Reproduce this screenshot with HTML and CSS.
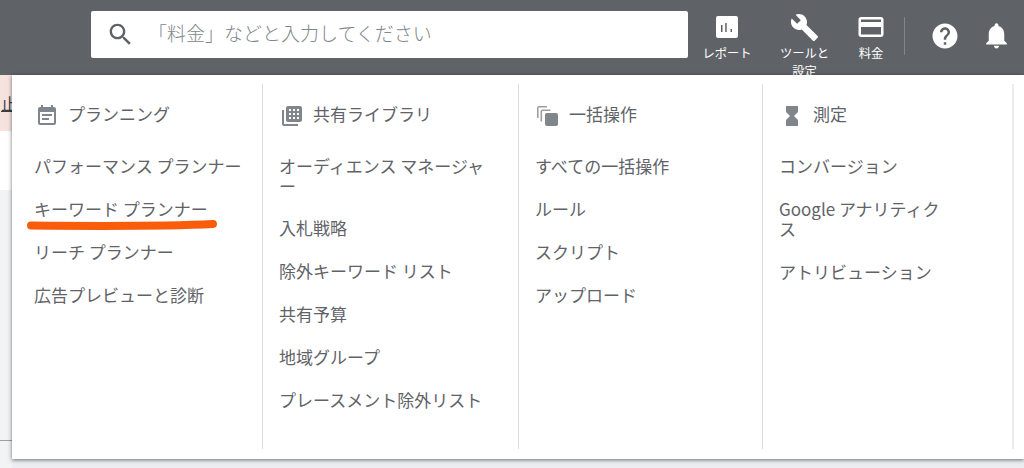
FILE: index.html
```html
<!DOCTYPE html>
<html lang="ja">
<head>
<meta charset="utf-8">
<title>ツールと設定</title>
<link rel="stylesheet" href="styles.css">
</head>
<body>
<header class="topbar">
  <div class="search">
    <svg class="search-icon" viewBox="0 0 24 24"><path d="M15.5 14h-.79l-.28-.27C15.41 12.59 16 11.11 16 9.5 16 5.91 13.09 3 9.5 3S3 5.91 3 9.5 5.91 16 9.5 16c1.61 0 3.09-.59 4.23-1.57l.27.28v.79l5 4.99L20.49 19l-4.99-5zm-6 0C7.01 14 5 11.99 5 9.5S7.01 5 9.5 5 14 7.01 14 9.5 11.99 14 9.5 14z"/></svg>
    <span class="placeholder">「料金」などと入力してください</span>
  </div>
  <nav class="tools">
    <div class="tool tool-report">
      <div class="tool-icon"><svg class="ic-report" viewBox="0 0 22 22"><path fill-rule="evenodd" d="M2 0h18a2 2 0 0 1 2 2v18a2 2 0 0 1-2 2H2a2 2 0 0 1-2-2V2a2 2 0 0 1 2-2zM5 9v7h1.5V9zM9.2 7v9h1.5V7zM14.5 13v3H16v-3z"/></svg></div>
      <span class="tool-label">レポート</span>
    </div>
    <div class="tool tool-tools">
      <div class="tool-icon"><svg class="ic-wrench" viewBox="1 1 22 22"><path d="M22.7 19l-9.1-9.1c.9-2.3.4-5-1.5-6.9-2-2-5-2.4-7.4-1.3L9 6 6 9 1.6 4.7C.4 7.1.9 10.1 2.9 12.1c1.9 1.9 4.6 2.4 6.9 1.5l9.1 9.1c.4.4 1 .4 1.4 0l2.3-2.3c.5-.4.5-1.1.1-1.4z"/></svg></div>
      <span class="tool-label">ツールと設定</span>
    </div>
    <div class="tool tool-billing">
      <div class="tool-icon"><svg class="ic-card" viewBox="0 0 24 24"><path d="M20 4H4c-1.11 0-1.99.89-1.99 2L2 18c0 1.11.89 2 2 2h16c1.11 0 2-.89 2-2V6c0-1.11-.89-2-2-2zm0 14H4v-6h16v6zm0-10H4V6h16v2z"/></svg></div>
      <span class="tool-label">料金</span>
    </div>
    <div class="tools-divider"></div>
    <svg class="ic-help" viewBox="0 0 24 24"><path d="M12 2C6.48 2 2 6.48 2 12s4.48 10 10 10 10-4.48 10-10S17.52 2 12 2zm1 17h-2v-2h2v2zm2.07-7.75l-.9.92C13.45 12.9 13 13.5 13 15h-2v-.5c0-1.1.45-2.1 1.17-2.83l1.24-1.26c.37-.36.59-.86.59-1.41 0-1.1-.9-2-2-2s-2 .9-2 2H8c0-2.21 1.79-4 4-4s4 1.79 4 4c0 .88-.36 1.68-.93 2.25z"/></svg>
    <svg class="ic-bell" viewBox="0 0 24 24"><path d="M12 22c1.1 0 2-.9 2-2h-4c0 1.1.89 2 2 2zm6-6v-5c0-3.07-1.64-5.64-4.5-6.32V4c0-.83-.67-1.5-1.5-1.5s-1.5.67-1.5 1.5v.68C7.63 5.36 6 7.92 6 11v5l-2 2v1h16v-1l-2-2z"/></svg>
  </nav>
</header>
<div class="page">
  <aside class="behind">
    <div class="behind-alert"><span class="behind-link">止</span></div>
    <div class="behind-white"></div>
    <div class="behind-gray"></div>
    <div class="behind-foot"></div>
  </aside>
  <main class="panel">
    <section class="col col-first">
      <h2 class="col-head">
        <svg class="head-icon" viewBox="0 0 24 24"><path d="M17 10H7v2h10v-2zm2-7h-1V1h-2v2H8V1H6v2H5c-1.11 0-1.99.9-1.99 2L3 19c0 1.1.89 2 2 2h14c1.1 0 2-.9 2-2V5c0-1.1-.9-2-2-2zm0 16H5V8h14v11zm-5-5H7v2h7v-2z"/></svg>
        <span>プランニング</span>
      </h2>
      <ul class="items">
        <li>パフォーマンス プランナー</li>
        <li>キーワード プランナー</li>
        <li>リーチ プランナー</li>
        <li>広告プレビューと診断</li>
      </ul>
    </section>
    <section class="col col-library">
      <h2 class="col-head">
        <svg class="head-icon" viewBox="0 0 24 24"><path d="M4 6H2v14c0 1.1.9 2 2 2h14v-2H4V6zm16-4H8c-1.1 0-2 .9-2 2v12c0 1.1.9 2 2 2h12c1.1 0 2-.9 2-2V4c0-1.1-.9-2-2-2z"/><path class="dots" d="M9 5h2v2H9zM13 5h2v2h-2zM17 5h2v2h-2zM9 9h2v2H9zM13 9h2v2h-2zM17 9h2v2h-2zM9 13h2v2H9zM13 13h2v2h-2zM17 13h2v2h-2z"/></svg>
        <span>共有ライブラリ</span>
      </h2>
      <ul class="items">
        <li>オーディエンス マネージャー</li>
        <li>入札戦略</li>
        <li>除外キーワード リスト</li>
        <li>共有予算</li>
        <li>地域グループ</li>
        <li>プレースメント除外リスト</li>
      </ul>
    </section>
    <section class="col">
      <h2 class="col-head">
        <svg class="head-icon" viewBox="0 0 24 24"><path class="layer-light" d="M1 4a2 2 0 0 1 2-2h8v1.6H3a.4.4 0 0 0-.4.4v10H1z"/><path class="layer-light" d="M4.5 7.5a2 2 0 0 1 2-2h8v1.6h-8a.4.4 0 0 0-.4.4v10H4.500z"/><rect x="9" y="9" width="13" height="13" rx="2"/></svg>
        <span>一括操作</span>
      </h2>
      <ul class="items">
        <li>すべての一括操作</li>
        <li>ルール</li>
        <li>スクリプト</li>
        <li>アップロード</li>
      </ul>
    </section>
    <section class="col col-measure">
      <h2 class="col-head">
        <svg class="head-icon" viewBox="0 0 24 24"><path d="M6 2v6h.01L6 8.01 10 12l-4 4 .01.01H6V22h12v-5.99h-.01L18 16l-4-4 4-3.99-.01-.01H18V2H6z"/></svg>
        <span>測定</span>
      </h2>
      <ul class="items">
        <li>コンバージョン</li>
        <li>Google アナリティクス</li>
        <li>アトリビューション</li>
      </ul>
    </section>
    <svg class="highlight" viewBox="0 0 200 14"><path d="M8 7.5C60 8 150 8 190 6"/></svg>
  </main>
</div>
</body>
</html>
```

FILE: styles.css
```css
* { box-sizing: border-box; }
html, body { margin: 0; padding: 0; height: 468px; overflow: hidden; }
body {
  background: #eceef1;
  font-family: "Noto Sans CJK JP", "Liberation Sans", sans-serif;
  color: #5f6368;
}

.topbar {
  display: flex;
  align-items: flex-start;
  height: 75px;
  padding-left: 91px;
  background: #5f6368;
  overflow: hidden;
}
.search {
  display: flex;
  align-items: center;
  width: 597px;
  height: 47px;
  margin-top: 11px;
  padding-left: 15px;
  background: #fff;
  border-radius: 2px;
}
.search-icon { width: 29px; height: 29px; fill: #5f6368; flex: none; }
.placeholder {
  margin: 0 0 4px 13px;
  font-size: 19px;
  line-height: 26px;
  font-weight: 300;
  color: #80868b;
  white-space: nowrap;
}

.tools { display: flex; align-items: flex-start; }
.tool {
  display: flex;
  flex-direction: column;
  align-items: center;
  color: #fff;
}
.tool-report { width: 78px; }
.tool-tools { width: 77px; }
.tool-billing { width: 55px; padding-left: 1px; }
.tool-icon {
  display: flex;
  align-items: center;
  justify-content: center;
  height: 28px;
  margin-top: 13px;
  fill: #fff;
}
.tool-label {
  display: block;
  width: 50px;
  margin-top: 3px;
  font-size: 12.3px;
  line-height: 18px;
  text-align: center;
}
.ic-report { width: 22px; height: 22px; fill: #fff; }
.ic-wrench { width: 27px; height: 27px; fill: #fff; }
.ic-card { width: 30px; height: 30px; fill: #fff; }
.tools-divider {
  width: 1px;
  height: 38px;
  margin: 17px 0 0 6px;
  background: #80868b;
}
.ic-help { width: 30px; height: 30px; margin: 21px 0 0 25px; fill: #fff; flex: none; }
.ic-bell { width: 31px; height: 31px; margin: 20px 0 0 21px; fill: #fff; flex: none; }

.page { display: flex; height: 393px; }
.behind { display: flex; flex-direction: column; width: 12px; flex: none; overflow: hidden; }
.behind-alert {
  height: 56px;
  padding: 16px 0 0 1px;
  background: #f6e2df;
  font-size: 16px;
  line-height: 24px;
  color: #3c4043;
}
.behind-link { text-decoration: underline; }
.behind-white { height: 59px; background: #fff; }
.behind-gray { height: 251px; background: #f1f3f4; border-bottom: 1px solid #9aa0a6; }
.behind-foot { flex: 1; background: #f1f3f4; }

.panel {
  position: relative;
  display: grid;
  grid-template-columns: 251px 256px 244px 251px;
  align-items: stretch;
  flex: 1;
  height: 384px;
  padding: 9px 0 10px;
  background: #fff;
  box-shadow: 0 1px 4px rgba(0, 0, 0, .55);
}
.col {
  padding: 0 0 0 17px;
  border-right: 1px solid #dadce0;
}
.col-first { padding-left: 23px; }
.col-measure { border-right: 2px solid #ececec; }
.col-library .items { max-width: 216px; }
.col-library .items li:first-child { margin-bottom: -1px; }
.col-measure .items { max-width: 171px; }

.col-head {
  display: flex;
  align-items: center;
  gap: 9px;
  height: 24px;
  margin: 18px 0 0;
  font-size: 17px;
  line-height: 24px;
  font-weight: 400;
  color: #5f6368;
}
.head-icon { width: 24px; height: 24px; margin-top: 4px; fill: #80868b; flex: none; }
.dots { fill: #fff; }
.layer-light { fill: #9aa0a6; }

.items {
  display: flex;
  flex-direction: column;
  gap: 23px;
  margin: 30px 0 0 -1px;
  padding: 0;
  list-style: none;
  font-size: 17px;
  line-height: 20px;
  color: #5f6368;
}

.highlight {
  position: absolute;
  left: 11px;
  top: 143px;
  width: 200px;
  height: 14px;
  fill: none;
  stroke: #f95d0c;
  stroke-width: 8;
  stroke-linecap: round;
}
```
